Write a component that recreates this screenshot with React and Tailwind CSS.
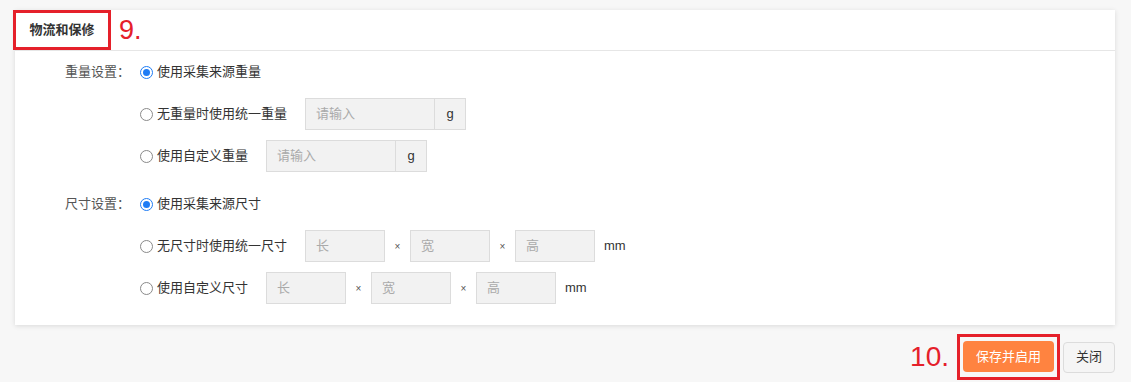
const FONT = { fontFamily: '"Liberation Sans", "Noto Sans CJK SC", sans-serif' }

const Radio = ({ checked, label }) => (
  <label className="flex items-center gap-[4px] text-[13px] text-[#333] whitespace-nowrap">
    {checked ? (
      <span className="w-[13px] h-[13px] rounded-full border border-[#1e7cf5] flex items-center justify-center bg-white">
        <span className="w-[7px] h-[7px] rounded-full bg-[#1e7cf5]"></span>
      </span>
    ) : (
      <span className="w-[13px] h-[13px] rounded-full border border-[#8a8a8a] bg-white"></span>
    )}
    <span>{label}</span>
  </label>
)

const WeightInput = () => (
  <div className="flex h-8 ml-[18px]">
    <div className="w-[130px] h-8 bg-[#f2f2f2] border border-[#dcdcdc] flex items-center px-[10px] text-[13px] text-[#aaa]">
      请输入
    </div>
    <div className="w-[31px] h-8 bg-[#f2f2f2] border border-l-0 border-[#dcdcdc] flex items-center justify-center text-[13px] text-[#333]">
      g
    </div>
  </div>
)

const DimBox = ({ text }) => (
  <div className="w-[80px] h-8 bg-[#f2f2f2] border border-[#dcdcdc] flex items-center px-[10px] text-[13px] text-[#aaa]">
    {text}
  </div>
)

const Times = () => <span className="w-[25px] text-center text-[10px] text-[#555]">×</span>

const DimInputs = () => (
  <div className="flex items-center h-8 ml-[18px]">
    <DimBox text="长" />
    <Times />
    <DimBox text="宽" />
    <Times />
    <DimBox text="高" />
    <span className="ml-[9px] text-[13px] text-[#333]">mm</span>
  </div>
)

const Row = ({ label, children }) => (
  <div className="flex items-center h-8">
    <div className="w-[115px] text-right text-[13px] text-[#555] whitespace-nowrap">{label}</div>
    <div className="ml-[10px] flex items-center">{children}</div>
  </div>
)

export default function App() {
  return (
    <div className="w-[1131px] h-[382px] bg-[#f7f7f7] overflow-hidden pt-[10px]" style={FONT}>
      <div className="ml-[15px] w-[1100px] bg-white shadow-[0_1px_5px_rgba(0,0,0,0.12)]">
        <div className="h-[41px] border-b border-[#e6e6e6] flex items-center">
          <div className="-ml-[2px] h-[40px] w-[98px] border-[3px] border-[#e5202a] flex items-center justify-center text-[13px] font-bold text-[#333] -mt-[1px]">
            物流和保修
          </div>
          <span className="ml-[8px] text-[27px] leading-none text-[#e5202a]">9.</span>
        </div>

        <div className="pt-[5px] pb-[21px] flex flex-col gap-[16px]">
          <div className="flex flex-col gap-[10px]">
            <Row label="重量设置：">
              <Radio checked label="使用采集来源重量" />
            </Row>
            <Row>
              <Radio label="无重量时使用统一重量" />
              <WeightInput />
            </Row>
            <Row>
              <Radio label="使用自定义重量" />
              <WeightInput />
            </Row>
          </div>
          <div className="flex flex-col gap-[10px]">
            <Row label="尺寸设置：">
              <Radio checked label="使用采集来源尺寸" />
            </Row>
            <Row>
              <Radio label="无尺寸时使用统一尺寸" />
              <DimInputs />
            </Row>
            <Row>
              <Radio label="使用自定义尺寸" />
              <DimInputs />
            </Row>
          </div>
        </div>
      </div>

      <div className="mt-[9px] pr-[16px] flex items-center justify-end">
        <span className="mr-[8px] text-[28px] leading-none text-[#e5202a]">10.</span>
        <div className="border-[3px] border-[#e5202a] p-[3px] pt-[4px] pb-[5px]">
          <button className="w-[91px] h-[31px] rounded-sm bg-[#ff8340] text-white text-[13px]">保存并启用</button>
        </div>
        <button className="ml-[3px] w-[52px] h-[31px] rounded-sm bg-[#f5f5f5] border border-[#dcdcdc] text-[13px] text-[#333]">
          关闭
        </button>
      </div>
    </div>
  )
}
